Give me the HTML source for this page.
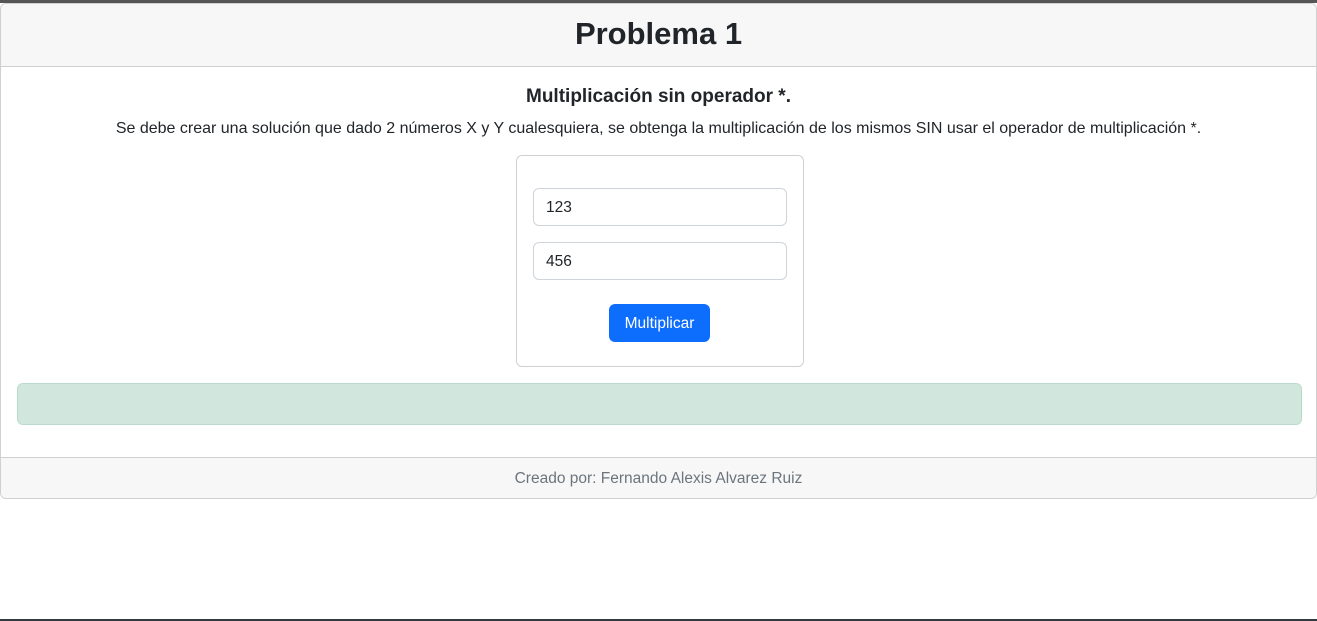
<!DOCTYPE html>
<html><head><meta charset="utf-8"><style>
*{box-sizing:border-box;margin:0;padding:0}
html,body{width:1317px;height:621px;overflow:hidden;background:#fff;font-family:"Liberation Sans",sans-serif;color:#212529}
.top{position:absolute;left:0;top:0;width:1317px;height:3px;background:#555}
.bot{position:absolute;left:0;top:619px;width:1317px;height:2px;background:#333a40}
.card{position:absolute;left:0;top:3px;width:1317px;height:496px;border:1px solid #d0d0d0;border-radius:6px;overflow:hidden}
.hd{height:63px;background:#f7f7f7;border-bottom:1px solid #d0d0d0;text-align:center;font-size:31px;font-weight:bold;line-height:60px}
h5{position:absolute;top:82px;width:100%;text-align:center;font-size:19px;font-weight:bold;}
p{position:absolute;top:116px;width:100%;text-align:center;font-size:16px}
.box{position:absolute;left:515px;top:151px;width:288px;height:212px;border:1px solid #d0d0d0;border-radius:6px}
.in{position:absolute;left:16px;width:254px;height:38px;border:1px solid #ced4da;border-radius:6px;font-size:15.5px;line-height:38px;padding-left:12px}
.btn{position:absolute;left:92px;top:148px;width:101px;height:38px;background:#0d6efd;color:#fff;border-radius:6px;text-align:center;line-height:40px;font-size:15.5px}
.al{position:absolute;left:16px;top:379px;width:1285px;height:42px;background:#d1e7dd;border:1px solid #badbcc;border-radius:6px}
.ft{position:absolute;left:0;top:453px;width:100%;height:42px;background:#f7f7f7;border-top:1px solid #d0d0d0;text-align:center;color:#6c757d;font-size:15.5px;line-height:42px}
</style></head><body>
<div class="top"></div>
<div class="card">
<div class="hd">Problema 1</div>
<h5>Multiplicación sin operador *.</h5>
<p>Se debe crear una solución que dado 2 números X y Y cualesquiera, se obtenga la multiplicación de los mismos SIN usar el operador de multiplicación *.</p>
<div class="box">
<div class="in" style="top:32px">123</div>
<div class="in" style="top:86px">456</div>
<div class="btn">Multiplicar</div>
</div>
<div class="al"></div>
<div class="ft">Creado por: Fernando Alexis Alvarez Ruiz</div>
</div>
<div class="bot"></div>
</body></html>
